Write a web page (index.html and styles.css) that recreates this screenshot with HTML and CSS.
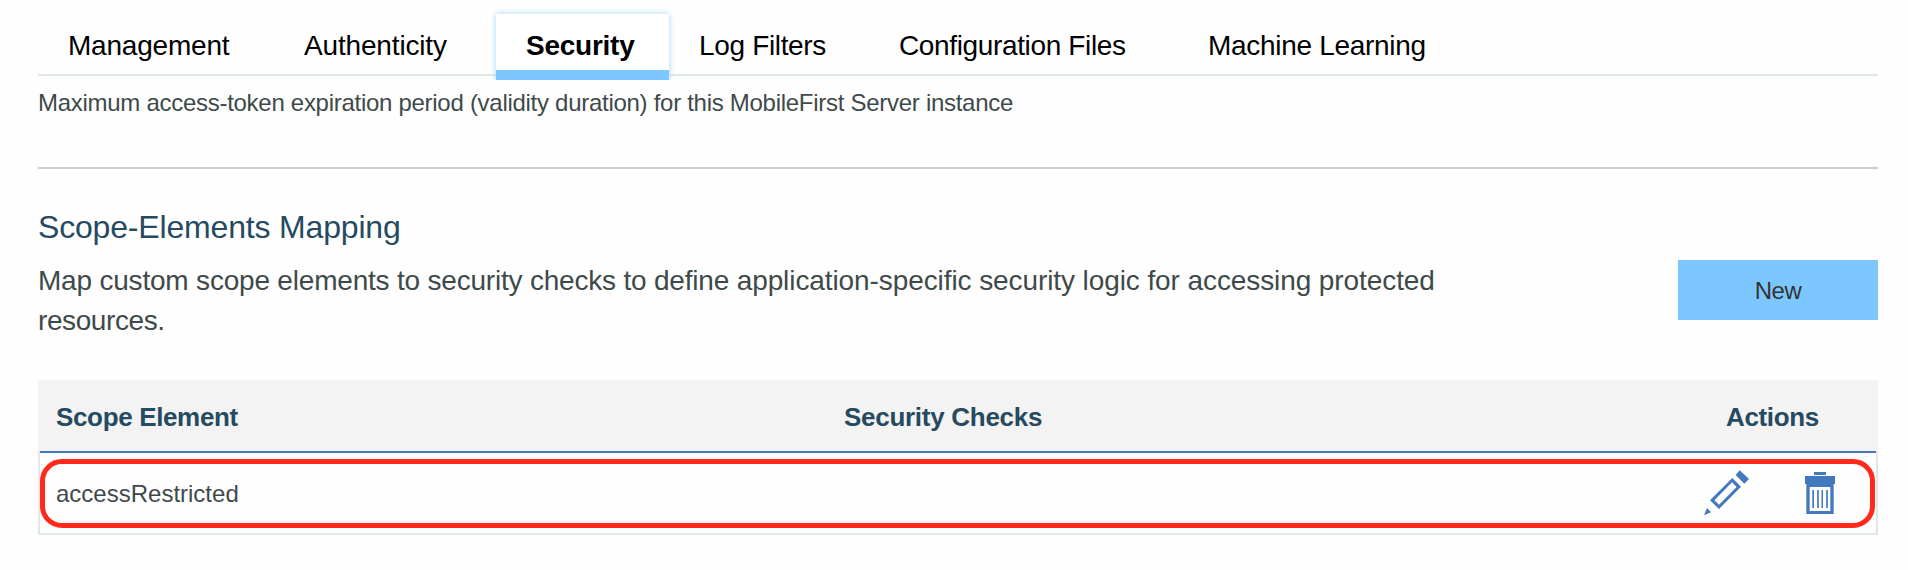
FILE: index.html
```
<!DOCTYPE html>
<html lang="en">
<head>
<meta charset="utf-8">
<title>Security</title>
<link rel="stylesheet" href="styles.css">
</head>
<body>
<main class="page">
  <nav class="tabs">
    <a class="tab tab-management">Management</a>
    <a class="tab tab-authenticity">Authenticity</a>
    <a class="tab tab-active">Security</a>
    <a class="tab tab-filters">Log Filters</a>
    <a class="tab tab-config">Configuration Files</a>
    <a class="tab tab-learning">Machine Learning</a>
  </nav>
  <p class="hint">Maximum access-token expiration period (validity duration) for this MobileFirst Server instance</p>
  <section class="mapping">
    <h2 class="title">Scope-Elements Mapping</h2>
    <div class="intro">
      <p class="lead"><span class="lead-start">Map custom scope elements to security checks to define </span>application-specific security logic for accessing protected <span class="lead-end">resources.</span></p>
      <button class="new-button" type="button">New</button>
    </div>
    <div class="table">
      <div class="head">
        <span class="head-scope">Scope Element</span>
        <span class="head-checks">Security Checks</span>
        <span class="head-actions">Actions</span>
      </div>
      <div class="row">
        <span class="scope-name">accessRestricted</span>
        <div class="actions">
          <svg class="icon-edit" viewBox="0 0 138 138">
            <path d="M110 1 138 27 124 41 98 15Z"/>
            <path fill-rule="evenodd" d="M88 24 114 50 48 117 21 91ZM87 37 34 91 48 104 101 51Z"/>
            <path d="M12 114 24 127 3 136Z"/>
          </svg>
          <svg class="icon-trash" viewBox="0 0 90 126">
            <path d="M27 0H63V9H27Z"/>
            <path d="M0 12H90V36H0Z"/>
            <path fill-rule="evenodd" d="M4 36H86V126H4ZM14 45V117H76V45Z"/>
            <path d="M22 54H27V108H22ZM36.500 54H41.500V108H36.500ZM49.500 54H54V108H49.500ZM63.500 54H68.500V108H63.500Z"/>
          </svg>
        </div>
        <div class="highlight"></div>
      </div>
    </div>
  </section>
</main>
</body>
</html>
```
FILE: styles.css
```
* {
  box-sizing: border-box;
}

body {
  margin: 0;
  background: #fefefe;
  color: #3e4a4a;
  font-family: "Liberation Sans", Arial, sans-serif;
}

.page {
  padding: 14px 30px 0 38px;
}

.tabs {
  display: grid;
  grid-template-columns: 238px 220px 173px 200px 309px 1fr;
  height: 62px;
  border-bottom: 2px solid #dfe7e8;
}

.tab {
  height: 66px;
  padding: 14px 0 0 28px;
  color: #000;
  font-size: 28px;
  line-height: 36px;
  letter-spacing: -0.34px;
  white-space: nowrap;
}

.tab-management {
  padding-left: 30px;
  letter-spacing: -0.2px;
}

.tab-authenticity {
  letter-spacing: -0.16px;
}

.tab-active {
  padding-left: 30px;
  border-bottom: 10px solid #7cc7ff;
  background: #fff;
  box-shadow: 0 0 6px #9dd5ff;
  clip-path: inset(-10px -10px 0 -10px);
  font-weight: 700;
  letter-spacing: -0.25px;
}

.tab-filters {
  padding-left: 30px;
}

.tab-config {
  padding-left: 30px;
  letter-spacing: -0.36px;
}

.tab-learning {
  padding-left: 30px;
  letter-spacing: -0.3px;
}

.hint {
  margin: 0;
  height: 91px;
  padding-top: 13px;
  font-size: 24px;
  line-height: 28px;
  letter-spacing: -0.281px;
  white-space: nowrap;
}

.mapping {
  padding-top: 40px;
  border-top: 2px solid #c7cfd3;
}

.title {
  margin: 0;
  height: 51px;
  color: #264a60;
  font-size: 32px;
  font-weight: 400;
  line-height: 36px;
  letter-spacing: -0.173px;
}

.intro {
  display: flex;
  justify-content: space-between;
  height: 120px;
}

.lead {
  width: 1450px;
  margin: 0;
  padding-top: 1px;
  font-size: 28px;
  line-height: 40px;
  letter-spacing: -0.09px;
}

.lead-start {
  letter-spacing: -0.2px;
}

.lead-end {
  letter-spacing: -0.4px;
}

.new-button {
  width: 200px;
  height: 60px;
  margin: 0;
  padding: 2px 0 0;
  border: 0;
  background: #7cc7ff;
  color: #333;
  font: 24px/28px "Liberation Sans", Arial, sans-serif;
  letter-spacing: -0.5px;
}

.table {
  height: 155px;
}

.head {
  display: grid;
  grid-template-columns: 788px 882px 1fr;
  height: 71px;
  padding: 22px 0 0 18px;
  background: #f3f3f3;
  color: #264a60;
  font-size: 26px;
  font-weight: 700;
  line-height: 30px;
  letter-spacing: -0.35px;
}

.head-checks {
  letter-spacing: -0.28px;
}

.row {
  position: relative;
  display: flex;
  justify-content: space-between;
  height: 84px;
  padding: 21px 41px 0 16px;
  border: 2px solid #dfe7e8;
  border-top: 0;
  box-shadow: inset 0 2px 0 #4178be;
}

.scope-name {
  padding-top: 8px;
  font-size: 24px;
  line-height: 28px;
}

.actions {
  display: flex;
  gap: 56px;
  fill: #4178be;
}

.icon-edit {
  width: 46px;
  height: 46px;
  margin-top: -2px;
}

.icon-trash {
  width: 30px;
  height: 42px;
}

/* Callout drawn over the table row */
.highlight {
  position: absolute;
  inset: 8px 1px 5px 0;
  border: 5px solid #ff2a1c;
  border-radius: 22px;
}
```
